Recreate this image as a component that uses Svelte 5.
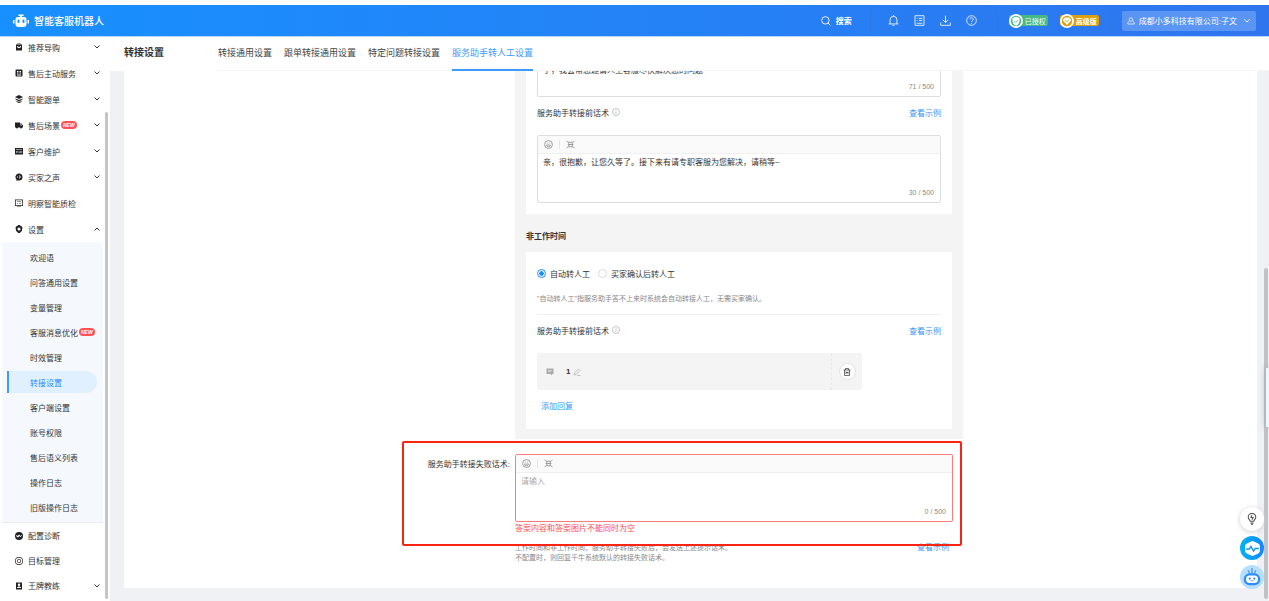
<script lang="ts">
  type MenuItem = {
    label: string;
    icon: string;
    arrow?: boolean;
    isNew?: boolean;
  };

  // 16x16 glyphs, holes are cut with evenodd
  const icons: Record<string, string> = {
    bag: 'M2 3h3V1h6v2h3v12H2zM6 3h4V2H6zM4 6c0 6 8 6 8 0h-2c0 3-4 3-4 0z',
    list: 'M3 1h10a2 2 0 0 1 2 2v10a2 2 0 0 1-2 2H3a2 2 0 0 1-2-2V3a2 2 0 0 1 2-2zM4 4v2h3V4zM9 4v2h3V4zM4 7v2h3V7zM9 7v2h3V7zM4 11v2h8v-2z',
    layers: 'M8 0l8 4-8 4-8-4zM1 7l7 3 7-3v2l-7 4-7-4zM3 12l5 2 5-2v2l-5 2-5-2z',
    truck: 'M0 3h10v2h3l3 4v4h-2a2 2 0 0 1-4 0H6a2 2 0 0 1-4 0H0zM11 6v3h3l-2-3z',
    card: 'M0 2h16v13H0zM2 5v1h12V5zM2 8v1h5V8zM9 8v1h5V8zM2 11v1h3v-1zM7 11v1h7v-1z',
    voice: 'M8 1a7 7 0 0 1 0 14H2l1-2A7 7 0 0 1 8 1zM5 6v4h1V6zM8 4v8h1V4zM11 6v4h1V6z',
    monitor: 'M0 1h16v13H0zM1.500 2.500v10h13v-10zM4 5h8v1H4zM4 8h2v1H4zM8 8h4v1H8zM4 15h8v1H4z',
    gear: 'M6 0h4l1 2 3 1 1 4-1 2v3l-3 2-1 2H6l-1-2-3-2V9L1 7l1-4 3-1zM8 5a3 3 0 1 0 0 6 3 3 0 0 0 0-6z',
    check: 'M8 0a8 8 0 1 1 0 16A8 8 0 0 1 8 0zM2 8l4 3 3-3 2 2 3-3-1-1-2 2-3-3-3 3-3-2z',
    target: 'M8 0a8 8 0 1 1 0 16A8 8 0 0 1 8 0zM8 1.4a6.6 6.6 0 1 0 0 13.2A6.6 6.6 0 0 0 8 1.4zM8 4a4 4 0 1 1 0 8 4 4 0 0 1 0-8zM8 5.3a2.7 2.7 0 1 0 0 5.4 2.7 2.7 0 0 0 0-5.4z',
    coach: 'M2 1h12v14H2zM8 3a2 2 0 1 0 0 5 2 2 0 0 0 0-5zM4 12h8c0-4-8-4-8 0z'
  };

  const topMenu: MenuItem[] = [
    { label: '推荐导购', icon: 'bag', arrow: true },
    { label: '售后主动服务', icon: 'list', arrow: true },
    { label: '智能跟单', icon: 'layers', arrow: true },
    { label: '售后场景', icon: 'truck', arrow: true, isNew: true },
    { label: '客户维护', icon: 'card', arrow: true },
    { label: '买家之声', icon: 'voice', arrow: true },
    { label: '明察智能质检', icon: 'monitor' }
  ];

  const settings = [
    '欢迎语',
    '问答通用设置',
    '变量管理',
    '客服消息优化',
    '时效管理',
    '转接设置',
    '客户端设置',
    '账号权限',
    '售后语义列表',
    '操作日志',
    '旧版操作日志'
  ];

  const bottomMenu: MenuItem[] = [
    { label: '配置诊断', icon: 'check' },
    { label: '目标管理', icon: 'target' },
    { label: '王牌教练', icon: 'coach', arrow: true }
  ];

  const tabs = ['转接通用设置', '跟单转接通用设置', '特定问题转接设置', '服务助手转人工设置'];

  let activeSetting = $state('转接设置');
  let activeTab = $state('服务助手转人工设置');
  let mode = $state('auto');
  let busyText = $state('了，我会帮您邀请人工客服尽快解决您的问题');
  let beforeText = $state('亲，很抱歉，让您久等了。接下来有请专职客服为您解决，请稍等~');
  let failText = $state('');
</script>

{#snippet chevron(up = false)}
  <svg class="chevron" class:up viewBox="0 0 8 8"><path d="M1.5 2.5 4 5l2.5-2.5" /></svg>
{/snippet}

{#snippet menuRow(item: MenuItem)}
  <a href="#menu" class="menu-row">
    <svg class="menu-icon" viewBox="0 0 16 16"><path d={icons[item.icon]} fill-rule="evenodd" /></svg>
    <span>{item.label}</span>
    {#if item.isNew}<em class="new">NEW</em>{/if}
    {#if item.arrow}{@render chevron()}{/if}
  </a>
{/snippet}

{#snippet toolbar()}
  <div class="toolbar">
    <button type="button" aria-label="表情">
      <svg class="line" viewBox="0 0 16 16">
        <circle cx="8" cy="8" r="7" /><path d="M4.5 9c.5 4 6.500 4 7 0zM5 5.500h1.500M9.500 5.500H11" />
      </svg>
    </button>
    <button type="button" aria-label="变量">
      <svg class="line" viewBox="0 0 16 16">
        <path d="M1 2l3 2h8l3-2M3 8h10M1 14l3-2h8l3 2M5 4v8M11 4v8" />
      </svg>
    </button>
  </div>
{/snippet}

{#snippet fieldHead()}
  <div class="field-head">
    <span>服务助手转接前话术</span>
    <svg class="line info" viewBox="0 0 16 16"><circle cx="8" cy="8" r="7" /><path d="M8 7v5M8 4v1.500" /></svg>
    <a href="#example">查看示例</a>
  </div>
{/snippet}

<div class="app">
  <header class="topbar">
    <svg class="logo" viewBox="0 0 32 28">
      <path d="M11 1h10v3h-3v2h4a5 5 0 0 1 5 5v9a6 6 0 0 1-6 6H11a6 6 0 0 1-6-6v-9a5 5 0 0 1 5-5h4V4h-3zM11 11a2 2 0 0 0-2 2v3a2 2 0 0 0 4 0v-3a2 2 0 0 0-2-2zM21 11a2 2 0 0 0-2 2v3a2 2 0 0 0 4 0v-3a2 2 0 0 0-2-2zM0 12h3v7H0zM29 12h3v7h-3z" fill-rule="evenodd" />
    </svg>
    <strong class="brand">智能客服机器人</strong>
    <button type="button" class="search">
      <svg class="line" viewBox="0 0 16 16"><circle cx="7" cy="7" r="6" /><path d="M11 11l4 4" /></svg>
      搜索
    </button>
    <div class="tools">
      <button type="button" aria-label="通知">
        <svg class="line" viewBox="0 0 16 16"><path d="M1 13h14M3 13V7a5 5 0 0 1 10 0v6M6.500 15h3M8 0v2" /></svg>
      </button>
      <button type="button" aria-label="公告">
        <svg class="line" viewBox="0 0 16 16"><path d="M1.500 1h13v14h-13zM4 5h1M7 5h5M4 8h1M7 8h5M4 12h8" /></svg>
      </button>
      <button type="button" aria-label="下载">
        <svg class="line" viewBox="0 0 16 16"><path d="M8 1v10M4 7l4 4 4-4M1 11v4h14v-4" /></svg>
      </button>
      <button type="button" aria-label="帮助">
        <svg class="line" viewBox="0 0 16 16"><circle cx="8" cy="8" r="7" /><path d="M5.500 6.500c0-3.500 5-3.500 5 0C10.500 8 8 8 8 10M8 11.500V13" /></svg>
      </button>
    </div>
    <div class="badges">
      <span class="badge green">
        <svg viewBox="0 0 16 16"><circle cx="8" cy="8" r="7" /><path class="mark" d="M8 3l4 1.500V8c0 3-2 4.500-4 5.500C6 12.500 4 11 4 8V4.500z" /><path class="tick" d="M6 8l1.500 1.500L10 7" /></svg>
        已授权
      </span>
      <span class="badge gold">
        <svg viewBox="0 0 16 16"><circle cx="8" cy="8" r="7" /><path class="mark" d="M5.500 4h5L13 7l-5 5.500L3 7z" /><path class="tick" d="M6 7l2 2 2-2" /></svg>
        高级版
      </span>
    </div>
    <button type="button" class="user">
      <svg class="line" viewBox="0 0 16 16"><circle cx="8" cy="5" r="3.500" /><path d="M5 8c-3 1-3.500 4-3.500 6h13c0-2-.5-5-3.500-6" /></svg>
      <span>成都小多科技有限公司:子文</span>
      {@render chevron()}
    </button>
  </header>

  <div class="body">
    <aside class="sidebar">
      <nav class="menu">
        {#each topMenu as item}
          {@render menuRow(item)}
        {/each}
        <a href="#menu" class="menu-row">
          <svg class="menu-icon" viewBox="0 0 16 16"><path d={icons.gear} fill-rule="evenodd" /></svg>
          <span>设置</span>
          {@render chevron(true)}
        </a>
        <div class="submenu">
          {#each settings as name}
            <a href="#settings" class:active={activeSetting === name} onclick={() => (activeSetting = name)}>
              {name}{#if name === '客服消息优化'}<em class="new">NEW</em>{/if}
            </a>
          {/each}
        </div>
        {#each bottomMenu as item}
          {@render menuRow(item)}
        {/each}
      </nav>
      <div class="scrollbar"></div>
    </aside>

    <main class="main">
      <div class="page-head">
        <h1>转接设置</h1>
        <nav class="tabs">
          {#each tabs as tab}
            <a href="#tab" class:active={activeTab === tab} onclick={() => (activeTab = tab)}>{tab}</a>
          {/each}
        </nav>
      </div>

      <div class="content">
        <div class="form-row">
          <div class="group">
            <section class="panel first">
              <div class="editor scrolled">
                <textarea aria-label="工作时间话术" bind:value={busyText}></textarea>
                <span class="count">71 / 500</span>
              </div>
              {@render fieldHead()}
              <div class="editor">
                {@render toolbar()}
                <textarea aria-label="服务助手转接前话术" bind:value={beforeText}></textarea>
                <span class="count">30 / 500</span>
              </div>
            </section>

            <h2>非工作时间</h2>
            <section class="panel off">
              <div class="radios">
                <label><input type="radio" value="auto" bind:group={mode} />自动转人工</label>
                <label><input type="radio" value="confirm" bind:group={mode} />买家确认后转人工</label>
              </div>
              <p class="hint">"自动转人工"指服务助手答不上来时系统会自动转接人工，无需买家确认。</p>
              {@render fieldHead()}
              <div class="reply">
                <div class="reply-main">
                  <svg class="bubble" viewBox="0 0 16 16"><path d="M1 1h14v11h-3v3l-3-3H1zM4 4v1h8V4zM4 7v1h6V7z" fill-rule="evenodd" /></svg>
                  <b>1</b>
                  <button type="button" aria-label="编辑">
                    <svg class="line" viewBox="0 0 16 16"><path d="M2 14l1-4 8-8 3 3-8 8zM8 15h7" /></svg>
                  </button>
                </div>
                <div class="reply-side">
                  <button type="button" class="trash" aria-label="删除">
                    <svg class="line" viewBox="0 0 16 16"><path d="M1 4h14M5 4V1h6v3M3 4v11h10V4M6 7v5M10 7v5M6 9h4" /></svg>
                  </button>
                </div>
              </div>
              <a href="#add" class="add">添加回复</a>
            </section>
          </div>
        </div>

        <div class="form-row fail">
          <label for="fail-text">服务助手转接失败话术:</label>
          <div class="fail-body">
            <div class="editor error">
              {@render toolbar()}
              <textarea id="fail-text" placeholder="请输入" bind:value={failText}></textarea>
              <span class="count">0 / 500</span>
            </div>
            <p class="error-text">答案内容和答案图片不能同时为空</p>
            <div class="help">
              <p>工作时间和非工作时间，服务助手转接失败后，会发送上述提示话术。<br />不配置时，则回复千牛系统默认的转接失败话术。</p>
              <a href="#example">查看示例</a>
            </div>
            <div class="highlight"></div>
          </div>
        </div>
      </div>
    </main>
  </div>

  <div class="page-scrollbar"></div>
  <div class="drawer-handle"></div>
  <div class="floats">
    <button type="button" class="float bulb" aria-label="建议">
      <svg class="line" viewBox="0 0 16 16"><path d="M5.500 11C5.500 9 3 8.500 3 5.500a5 5 0 0 1 10 0c0 3-2.500 3.500-2.500 5.500zM6 13.500h4M7 15.500h2M8 3L6.500 6h3L8 9" /></svg>
    </button>
    <button type="button" class="float pulse" aria-label="诊断">
      <svg viewBox="0 0 16 16"><path d="M8 1l5 2q2 1 2 3v4q0 2-2 3l-5 2-5-2q-2-1-2-3V6q0-2 2-3z" fill="#fff" /><path d="M2 8.500h3L6.500 6 9 10.500 10.500 8H14" fill="none" stroke="#1296fa" stroke-width="1.300" /></svg>
    </button>
    <button type="button" class="float robot" aria-label="机器人">
      <svg viewBox="0 0 24 24"><path d="M7 3l2 5M12 0v8M17 3l-2 5" stroke="#5aa2e8" stroke-width="2" /><rect x="1" y="7" width="22" height="16" rx="8" fill="#2f8cf0" /><rect x="4" y="10" width="16" height="10" rx="5" fill="#fff" /><circle cx="9" cy="14" r="1.500" fill="#2f8cf0" /><circle cx="15" cy="14" r="1.500" fill="#2f8cf0" /><path d="M10 17h4" stroke="#2f8cf0" /></svg>
    </button>
  </div>
</div>

<style>
  :global(body) {
    overflow: hidden;
  }
  .app {
    height: 100vh;
    box-sizing: border-box;
    border-top: 5px solid #fdfdfd;
    display: flex;
    flex-direction: column;
    font-family: 'Liberation Sans', 'Noto Sans CJK SC', sans-serif;
    font-size: 8px;
    color: #333;
    background: #fff;
  }
  .app :is(button, input, textarea) {
    font: inherit;
    color: inherit;
    margin: 0;
    padding: 0;
    border: 0;
    background: none;
    box-sizing: border-box;
  }
  h1,
  h2,
  p {
    margin: 0;
  }
  a {
    color: #3296fa;
    text-decoration: none;
  }
  .line {
    fill: none;
    stroke: currentColor;
    stroke-width: 1.4;
  }
  .chevron {
    width: 8px;
    height: 8px;
    fill: none;
    stroke: currentColor;
  }
  .chevron.up {
    transform: rotate(180deg);
  }

  .topbar {
    flex: none;
    height: 31px;
    display: flex;
    align-items: center;
    padding: 0 13px;
    color: #fff;
    background: linear-gradient(90deg, #1890ff, #2f75ee);
    border-bottom: 1px solid #b5d6fb;
  }
  .logo {
    width: 16px;
    height: 14px;
    fill: #fff;
  }
  .brand {
    margin-left: 5px;
    font-size: 10px;
    font-weight: 500;
  }
  .app .search {
    display: flex;
    align-items: center;
    gap: 5px;
    margin-left: auto;
    padding-right: 18px;
    font-weight: 700;
  }
  .search svg {
    width: 10px;
    height: 10px;
  }
  .tools,
  .badges {
    display: flex;
    align-items: center;
    height: 22px;
    border-left: 1px solid #2878e8;
  }
  .tools {
    gap: 15px;
    padding: 0 20px 0 17px;
  }
  .tools button {
    display: flex;
  }
  .tools svg {
    width: 11px;
    height: 11px;
    stroke-width: 1.2;
  }
  .badges {
    gap: 12px;
    padding: 0 11px;
    border-right: 1px solid #2878e8;
  }
  .badge {
    display: flex;
    align-items: center;
    gap: 2px;
    width: 39px;
    height: 11px;
    border-radius: 2px;
    font-size: 7px;
    white-space: nowrap;
  }
  .badge svg {
    flex: none;
    width: 14px;
    height: 14px;
    stroke: #fff;
    stroke-width: 2;
  }
  .badge .mark {
    fill: #fff;
    stroke: none;
  }
  .badge .tick {
    fill: none;
    stroke: #48b884;
    stroke-width: 1;
  }
  .badge.green {
    background: #48b884;
    fill: #48b884;
  }
  .badge.gold {
    background: #dca00e;
    fill: #dca00e;
    font-weight: 700;
  }
  .badge.gold .tick {
    stroke: #dca00e;
  }
  .app .user {
    display: flex;
    align-items: center;
    gap: 4px;
    height: 20px;
    margin-left: 11px;
    padding: 0 5px;
    border-radius: 2px;
    background: #5b95f3;
  }
  .user .line {
    width: 8px;
    height: 8px;
  }
  .user .chevron {
    margin-left: 2px;
  }

  .body {
    flex: 1;
    min-height: 0;
    display: flex;
  }
  .sidebar {
    position: relative;
    flex: none;
    width: 110px;
    overflow: hidden;
    background: #fff;
  }
  /* the menu is scrolled a little under the top bar */
  .menu {
    margin-top: -3px;
  }
  .menu-row {
    display: flex;
    align-items: center;
    height: 26px;
    padding: 0 9px 0 15px;
    color: #333;
  }
  .menu-icon {
    width: 8px;
    height: 8px;
    margin-right: 5px;
    fill: #222;
  }
  .menu-row .chevron {
    margin-left: auto;
  }
  .new {
    display: inline-block;
    margin-left: 1px;
    padding: 0 2px;
    border-radius: 4px;
    background: #ff5255;
    color: #fff;
    font-size: 5px;
    font-weight: 700;
    line-height: 8px;
  }
  .submenu {
    display: flex;
    flex-direction: column;
    gap: 3px;
    margin: 0 7px 0 2px;
    padding: 4px 0;
    background: #f5f9fd;
    border-bottom: 1px solid #eaeef3;
  }
  .submenu a {
    display: flex;
    align-items: center;
    height: 22px;
    margin: 0 6px 0 5px;
    padding-left: 21px;
    border-left: 2px solid transparent;
    border-radius: 0 11px 11px 0;
    color: #333;
  }
  .submenu a.active {
    border-left-color: #3c9cff;
    background: #e1f0ff;
    color: #1e8cff;
  }
  .submenu ~ .menu-row {
    height: 25px;
  }
  .scrollbar {
    position: absolute;
    top: 75px;
    right: 2px;
    bottom: 2px;
    width: 3px;
    border-radius: 2px;
    background: #c5c5c5;
  }

  .main {
    flex: 1;
    min-width: 0;
    overflow: hidden;
    background: #f0f1f5;
  }
  .page-head {
    display: flex;
    height: 34px;
    padding-left: 14px;
    background: #fff;
  }
  h1 {
    width: 94px;
    font-size: 10px;
    font-weight: 700;
    line-height: 32px;
  }
  .tabs {
    flex: 1;
    display: flex;
    gap: 12px;
    font-size: 9px;
    box-shadow: inset 0 -1px #f5f5f5;
  }
  .tabs a {
    line-height: 32px;
    border-bottom: 2px solid transparent;
    color: #444;
  }
  .tabs a.active {
    color: #3c9cff;
    border-bottom-color: #3c9cff;
  }
  .content {
    margin: 0 12px 0 14px;
    padding-bottom: 25px;
    overflow: hidden;
    background: #fff;
    border-radius: 0 0 2px 2px;
  }
  .form-row {
    display: grid;
    grid-template-columns: 391fr 448px 294fr;
  }
  .group {
    grid-column: 2;
    padding: 0 11px 10px;
    background: #f4f4f4;
  }
  .panel {
    padding: 11px;
    background: #fff;
  }
  .first {
    padding-top: 0;
  }
  h2 {
    padding-top: 8px;
    font-size: 8px;
    font-weight: 700;
    line-height: 30px;
  }
  .editor {
    display: flex;
    flex-direction: column;
    box-sizing: border-box;
    height: 68px;
    border: 1px solid #dedede;
    border-radius: 2px;
    background: #fff;
  }
  /* only the last line of this one shows below the page head */
  .editor.scrolled {
    height: 36px;
    margin-top: -10px;
  }
  .app .editor textarea {
    flex: 1;
    min-height: 0;
    padding: 2px 5px 0;
    line-height: 14px;
    resize: none;
    outline: none;
    overflow: hidden;
  }
  .editor textarea::placeholder {
    color: #aaa;
  }
  .count {
    align-self: flex-end;
    padding: 0 6px 3px 0;
    font-size: 7px;
    line-height: 12px;
    color: #888;
  }
  .editor.error {
    border-color: #ff7b7b;
  }
  .toolbar {
    display: flex;
    align-items: center;
    height: 17px;
    background: #fafafa;
    border-bottom: 1px solid #f0f0f0;
  }
  .toolbar button {
    display: flex;
    justify-content: center;
    width: 21px;
    color: #888;
  }
  .app .toolbar button + button {
    border-left: 1px solid #e5e5e5;
  }
  .toolbar svg {
    width: 9px;
    height: 9px;
  }
  .field-head {
    display: flex;
    align-items: center;
    height: 30px;
    margin-bottom: 8px;
  }
  .field-head a {
    margin-left: auto;
  }
  .info {
    width: 8px;
    height: 8px;
    margin-left: 3px;
    color: #aaa;
  }
  .off {
    padding-bottom: 14px;
  }
  .radios {
    display: flex;
    align-items: center;
    gap: 8px;
    height: 20px;
  }
  .radios label {
    display: flex;
    align-items: center;
    gap: 4px;
  }
  .app .radios input {
    appearance: none;
    width: 9px;
    height: 9px;
    border: 1px solid #d9d9d9;
    border-radius: 50%;
  }
  .app .radios input:checked {
    border-color: #1890ff;
    background: radial-gradient(#1890ff 40%, #fff 50%);
  }
  .hint {
    margin-top: 8px;
    padding-bottom: 7px;
    border-bottom: 1px solid #f0f0f0;
    font-size: 7px;
    line-height: 16px;
    color: #888;
  }
  .reply {
    display: flex;
    width: 325px;
    height: 37px;
    border-radius: 2px;
    background: #f4f4f4;
  }
  .reply-main {
    flex: 1;
    display: flex;
    align-items: center;
    padding-left: 9px;
  }
  .reply-main b {
    margin: 0 3px 0 12px;
  }
  .reply-main button {
    display: flex;
    color: #aaa;
  }
  .reply-main svg {
    width: 8px;
    height: 8px;
  }
  .bubble {
    fill: #aaa;
  }
  .reply-side {
    display: flex;
    align-items: center;
    justify-content: center;
    width: 30px;
    border-left: 1px dashed #e8e8e8;
  }
  .app .trash {
    display: flex;
    align-items: center;
    justify-content: center;
    width: 17px;
    height: 17px;
    border: 1px solid #e2e2e2;
    border-radius: 50%;
    background: #fff;
  }
  .trash svg {
    width: 8px;
    height: 8px;
  }
  .add {
    display: block;
    width: max-content;
    margin: 9px 0 0 4px;
    line-height: 16px;
  }

  .fail {
    padding-top: 15px;
  }
  .fail > label {
    padding-right: 5px;
    text-align: right;
    line-height: 22px;
  }
  .fail-body {
    position: relative;
    padding-right: 10px;
  }
  .error-text {
    line-height: 14px;
    color: #ff4d4f;
  }
  .help {
    display: flex;
    justify-content: space-between;
    align-items: flex-start;
    margin-top: 7px;
    padding-right: 4px;
    line-height: 10px;
  }
  .help p {
    font-size: 7px;
    color: #888;
  }
  .highlight {
    position: absolute;
    top: -13px;
    right: 1px;
    left: -113px;
    height: 101px;
    border: 2px solid #fa2314;
    border-radius: 2px;
    pointer-events: none;
  }

  .page-scrollbar {
    position: fixed;
    top: 268px;
    right: 1px;
    bottom: 2px;
    width: 4px;
    border-radius: 2px;
    background: #c1c2c5;
  }
  .drawer-handle {
    position: fixed;
    top: 368px;
    right: 0;
    width: 3px;
    height: 59px;
    background: #eef6ff;
    box-shadow: 0 0 6px #999;
  }
  .floats {
    position: fixed;
    right: 5px;
    bottom: 12px;
    display: flex;
    flex-direction: column;
    gap: 5px;
  }
  .app .float {
    display: flex;
    align-items: center;
    justify-content: center;
    width: 24px;
    height: 24px;
    border-radius: 50%;
  }
  .app .bulb {
    background: #fff;
    color: #555;
    box-shadow: 0 1px 5px #ccc;
  }
  .bulb svg {
    width: 12px;
    height: 12px;
  }
  .app .pulse {
    background: linear-gradient(90deg, #00b4f0, #1686ff);
  }
  .pulse svg {
    width: 17px;
    height: 17px;
  }
  .app .robot {
    background: #b5dfff;
  }
  .robot svg {
    width: 18px;
    height: 18px;
  }
</style>
